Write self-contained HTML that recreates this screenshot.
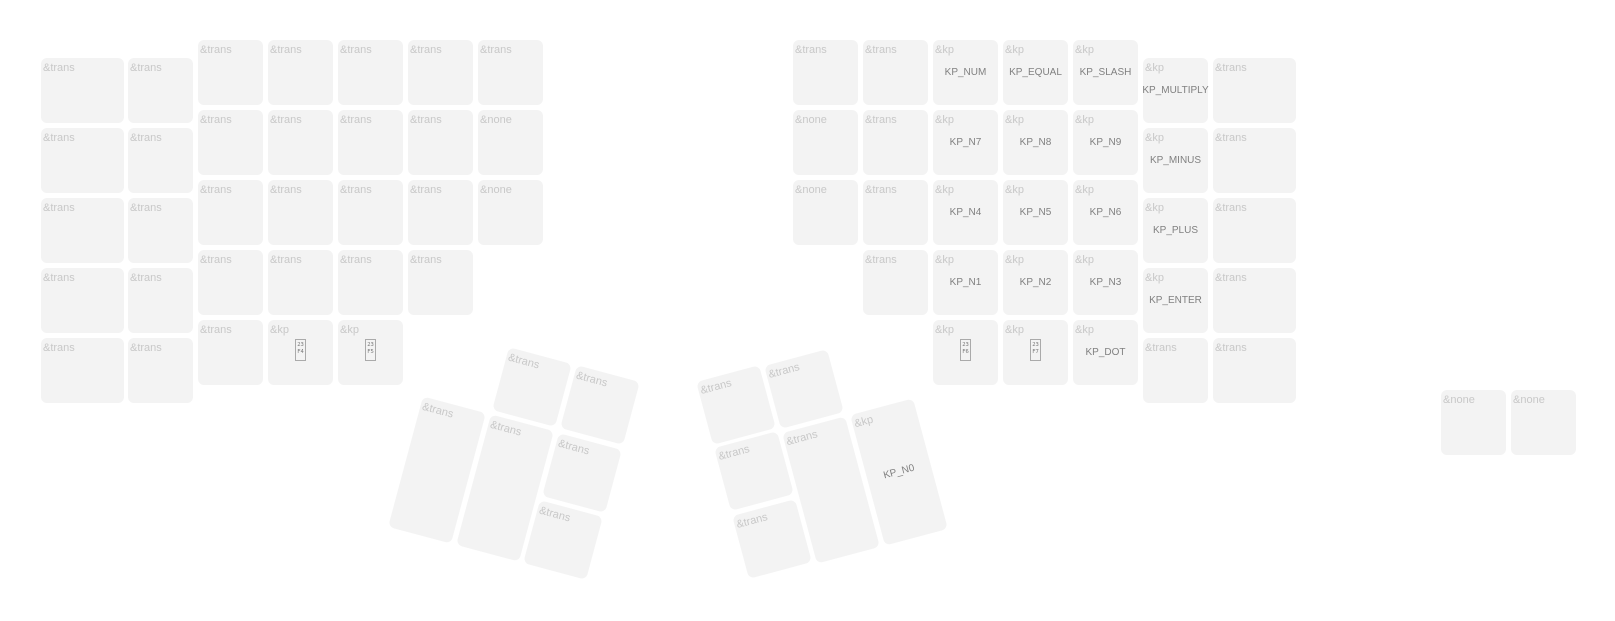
<!DOCTYPE html>
<html><head><meta charset="utf-8"><style>
html,body{margin:0;padding:0;background:#fff;}
body{width:1615px;height:621px;position:relative;overflow:hidden;font-family:"Liberation Sans",sans-serif;}
.k{position:absolute;width:65px;height:65px;background:#f3f3f3;border-radius:6px;}
.w{width:83px;}
.t{height:135px;}
.l{position:absolute;left:2px;top:4px;font-size:11px;color:#c8c8c8;white-space:nowrap;}
.c{position:absolute;left:0;right:0;top:0;bottom:0;display:flex;align-items:center;justify-content:center;font-size:10px;color:#808080;white-space:nowrap;}
.g{position:absolute;left:27px;top:19px;border:1px solid #aaa;font-size:5.5px;line-height:7px;color:#777;text-align:center;padding-top:2px;box-sizing:border-box;width:11px;height:22px;font-family:"DejaVu Sans Mono",monospace;}
.r{transform:translate(-50%,-50%) rotate(15deg);}
.rr{transform:translate(-50%,-50%) rotate(-15deg);}
</style></head><body>
<div class="k w" style="left:41px;top:58px"><span class="l">&amp;trans</span></div>
<div class="k w" style="left:41px;top:128px"><span class="l">&amp;trans</span></div>
<div class="k w" style="left:41px;top:198px"><span class="l">&amp;trans</span></div>
<div class="k w" style="left:41px;top:268px"><span class="l">&amp;trans</span></div>
<div class="k w" style="left:41px;top:338px"><span class="l">&amp;trans</span></div>
<div class="k" style="left:128px;top:58px"><span class="l">&amp;trans</span></div>
<div class="k" style="left:128px;top:128px"><span class="l">&amp;trans</span></div>
<div class="k" style="left:128px;top:198px"><span class="l">&amp;trans</span></div>
<div class="k" style="left:128px;top:268px"><span class="l">&amp;trans</span></div>
<div class="k" style="left:128px;top:338px"><span class="l">&amp;trans</span></div>
<div class="k" style="left:198px;top:40px"><span class="l">&amp;trans</span></div>
<div class="k" style="left:268px;top:40px"><span class="l">&amp;trans</span></div>
<div class="k" style="left:338px;top:40px"><span class="l">&amp;trans</span></div>
<div class="k" style="left:408px;top:40px"><span class="l">&amp;trans</span></div>
<div class="k" style="left:478px;top:40px"><span class="l">&amp;trans</span></div>
<div class="k" style="left:198px;top:110px"><span class="l">&amp;trans</span></div>
<div class="k" style="left:268px;top:110px"><span class="l">&amp;trans</span></div>
<div class="k" style="left:338px;top:110px"><span class="l">&amp;trans</span></div>
<div class="k" style="left:408px;top:110px"><span class="l">&amp;trans</span></div>
<div class="k" style="left:478px;top:110px"><span class="l">&amp;none</span></div>
<div class="k" style="left:198px;top:180px"><span class="l">&amp;trans</span></div>
<div class="k" style="left:268px;top:180px"><span class="l">&amp;trans</span></div>
<div class="k" style="left:338px;top:180px"><span class="l">&amp;trans</span></div>
<div class="k" style="left:408px;top:180px"><span class="l">&amp;trans</span></div>
<div class="k" style="left:478px;top:180px"><span class="l">&amp;none</span></div>
<div class="k" style="left:198px;top:250px"><span class="l">&amp;trans</span></div>
<div class="k" style="left:268px;top:250px"><span class="l">&amp;trans</span></div>
<div class="k" style="left:338px;top:250px"><span class="l">&amp;trans</span></div>
<div class="k" style="left:408px;top:250px"><span class="l">&amp;trans</span></div>
<div class="k" style="left:198px;top:320px"><span class="l">&amp;trans</span></div>
<div class="k" style="left:268px;top:320px"><span class="l">&amp;kp</span><div class="g">23<br>F4</div></div>
<div class="k" style="left:338px;top:320px"><span class="l">&amp;kp</span><div class="g">23<br>F5</div></div>
<div class="k t r" style="left:437px;top:470px"><span class="l">&amp;trans</span></div>
<div class="k t r" style="left:505px;top:488px"><span class="l">&amp;trans</span></div>
<div class="k r" style="left:532px;top:387px"><span class="l">&amp;trans</span></div>
<div class="k r" style="left:600px;top:405px"><span class="l">&amp;trans</span></div>
<div class="k r" style="left:582px;top:473px"><span class="l">&amp;trans</span></div>
<div class="k r" style="left:563px;top:540px"><span class="l">&amp;trans</span></div>
<div class="k rr" style="left:736px;top:405px"><span class="l">&amp;trans</span></div>
<div class="k rr" style="left:804px;top:389px"><span class="l">&amp;trans</span></div>
<div class="k rr" style="left:754px;top:471px"><span class="l">&amp;trans</span></div>
<div class="k rr" style="left:772px;top:539px"><span class="l">&amp;trans</span></div>
<div class="k t rr" style="left:831px;top:490px"><span class="l">&amp;trans</span></div>
<div class="k t rr" style="left:899px;top:472px"><span class="l">&amp;kp</span><span class="c">KP_N0</span></div>
<div class="k" style="left:793px;top:40px"><span class="l">&amp;trans</span></div>
<div class="k" style="left:863px;top:40px"><span class="l">&amp;trans</span></div>
<div class="k" style="left:933px;top:40px"><span class="l">&amp;kp</span><span class="c">KP_NUM</span></div>
<div class="k" style="left:1003px;top:40px"><span class="l">&amp;kp</span><span class="c">KP_EQUAL</span></div>
<div class="k" style="left:1073px;top:40px"><span class="l">&amp;kp</span><span class="c">KP_SLASH</span></div>
<div class="k" style="left:793px;top:110px"><span class="l">&amp;none</span></div>
<div class="k" style="left:863px;top:110px"><span class="l">&amp;trans</span></div>
<div class="k" style="left:933px;top:110px"><span class="l">&amp;kp</span><span class="c">KP_N7</span></div>
<div class="k" style="left:1003px;top:110px"><span class="l">&amp;kp</span><span class="c">KP_N8</span></div>
<div class="k" style="left:1073px;top:110px"><span class="l">&amp;kp</span><span class="c">KP_N9</span></div>
<div class="k" style="left:793px;top:180px"><span class="l">&amp;none</span></div>
<div class="k" style="left:863px;top:180px"><span class="l">&amp;trans</span></div>
<div class="k" style="left:933px;top:180px"><span class="l">&amp;kp</span><span class="c">KP_N4</span></div>
<div class="k" style="left:1003px;top:180px"><span class="l">&amp;kp</span><span class="c">KP_N5</span></div>
<div class="k" style="left:1073px;top:180px"><span class="l">&amp;kp</span><span class="c">KP_N6</span></div>
<div class="k" style="left:863px;top:250px"><span class="l">&amp;trans</span></div>
<div class="k" style="left:933px;top:250px"><span class="l">&amp;kp</span><span class="c">KP_N1</span></div>
<div class="k" style="left:1003px;top:250px"><span class="l">&amp;kp</span><span class="c">KP_N2</span></div>
<div class="k" style="left:1073px;top:250px"><span class="l">&amp;kp</span><span class="c">KP_N3</span></div>
<div class="k" style="left:933px;top:320px"><span class="l">&amp;kp</span><div class="g">23<br>F6</div></div>
<div class="k" style="left:1003px;top:320px"><span class="l">&amp;kp</span><div class="g">23<br>F7</div></div>
<div class="k" style="left:1073px;top:320px"><span class="l">&amp;kp</span><span class="c">KP_DOT</span></div>
<div class="k" style="left:1143px;top:58px"><span class="l">&amp;kp</span><span class="c">KP_MULTIPLY</span></div>
<div class="k" style="left:1143px;top:128px"><span class="l">&amp;kp</span><span class="c">KP_MINUS</span></div>
<div class="k" style="left:1143px;top:198px"><span class="l">&amp;kp</span><span class="c">KP_PLUS</span></div>
<div class="k" style="left:1143px;top:268px"><span class="l">&amp;kp</span><span class="c">KP_ENTER</span></div>
<div class="k" style="left:1143px;top:338px"><span class="l">&amp;trans</span></div>
<div class="k w" style="left:1213px;top:58px"><span class="l">&amp;trans</span></div>
<div class="k w" style="left:1213px;top:128px"><span class="l">&amp;trans</span></div>
<div class="k w" style="left:1213px;top:198px"><span class="l">&amp;trans</span></div>
<div class="k w" style="left:1213px;top:268px"><span class="l">&amp;trans</span></div>
<div class="k w" style="left:1213px;top:338px"><span class="l">&amp;trans</span></div>
<div class="k" style="left:1441px;top:390px"><span class="l">&amp;none</span></div>
<div class="k" style="left:1511px;top:390px"><span class="l">&amp;none</span></div>
</body></html>
